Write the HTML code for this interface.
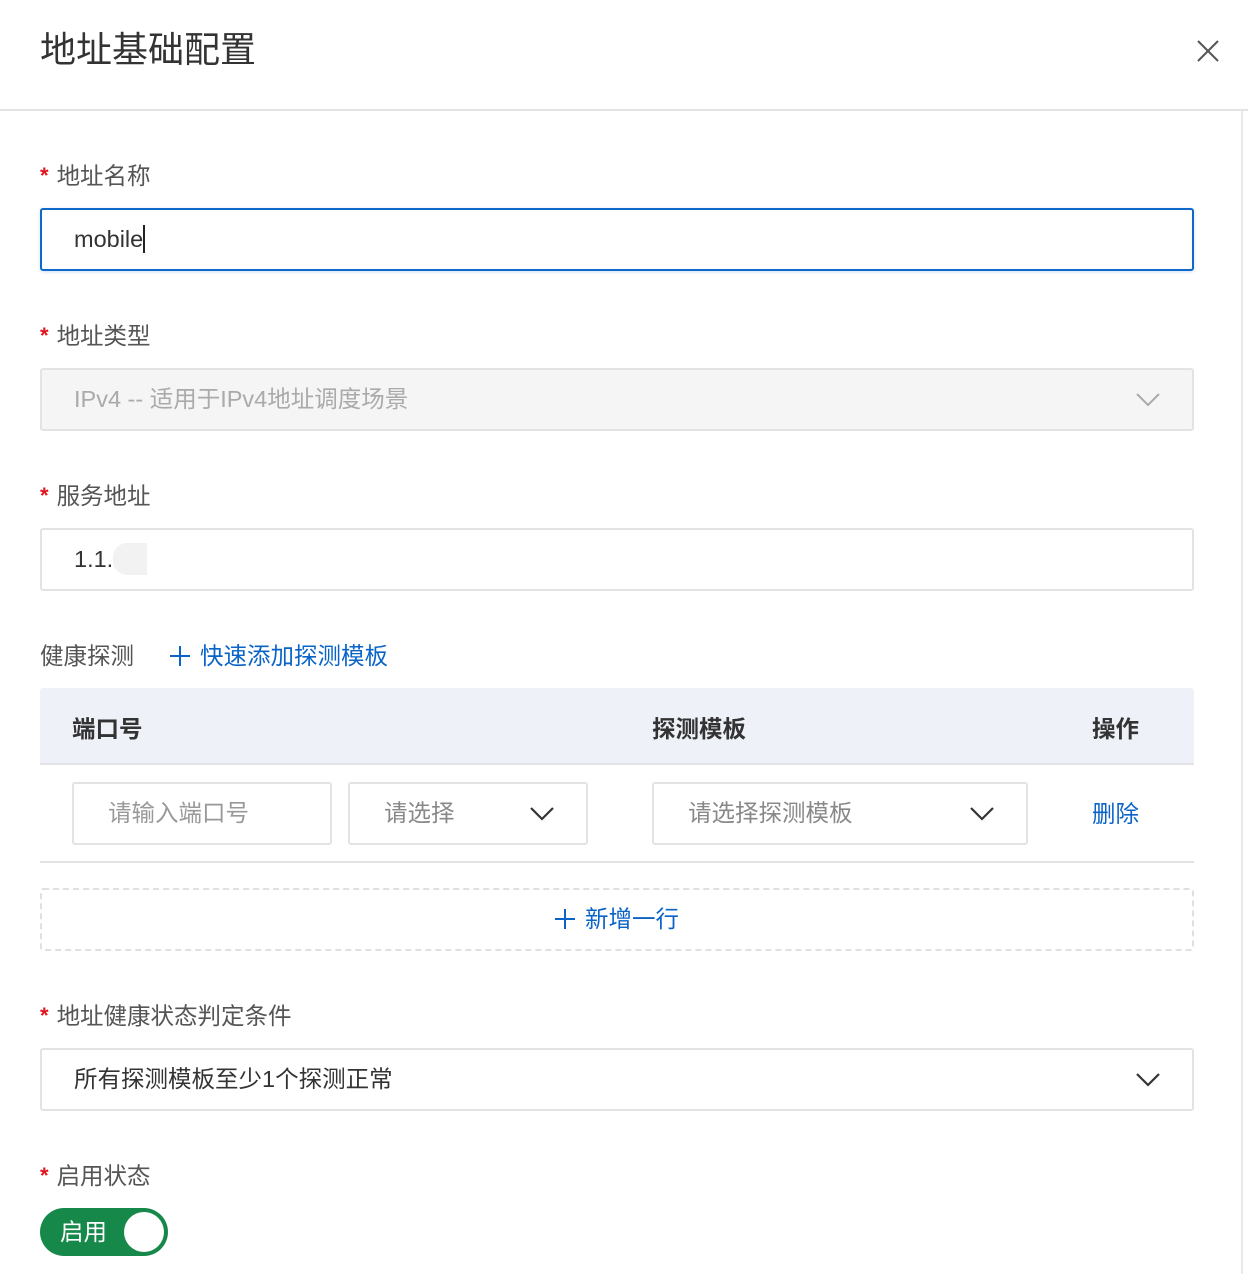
<!DOCTYPE html>
<html><head><meta charset="utf-8"><style>
*{margin:0;padding:0;box-sizing:border-box}
body{width:1248px;height:1274px;background:#fff;font-family:"Liberation Sans","Noto Sans CJK SC",sans-serif;position:relative;overflow:hidden;color:#333}
.a{position:absolute}
.title{left:40px;top:26px;font-size:36px;color:#333;line-height:48px}
.hdr{left:0;top:109px;width:1248px;height:2px;background:#e3e3e3}
.vr{left:1241px;top:110px;width:2px;height:1164px;background:#e8e8e8}
.lbl{font-size:23.5px;color:#555;line-height:30px;left:40px}
.lbl b{color:#e0141e;font-weight:bold;font-size:22px;margin-right:8px;position:relative;top:-1px}
.box{left:40px;width:1154px;height:63px;border:2px solid #e3e3e3;border-radius:3px;font-size:23.5px;line-height:59px;padding-left:32px;color:#333}
.chev{position:absolute}
.blue{color:#0a64c8}
</style></head><body>
<div class="a title">地址基础配置</div>
<svg class="a" style="left:1196px;top:39px" width="24" height="24" viewBox="0 0 24 24"><path d="M2 2L22 22M22 2L2 22" stroke="#555" stroke-width="2"/></svg>
<div class="a hdr"></div>
<div class="a vr"></div>

<div class="a lbl" style="top:161px"><b>*</b>地址名称</div>
<div class="a box" style="top:208px;border-color:#1068c8;box-shadow:0 1px 3px rgba(16,104,200,.2)">mobile<span style="display:inline-block;width:2px;height:28px;background:#222;vertical-align:-6px"></span></div>

<div class="a lbl" style="top:321px"><b>*</b>地址类型</div>
<div class="a box" style="top:368px;background:#f5f5f5;color:#aaa">IPv4 -- 适用于IPv4地址调度场景<svg class="chev" style="left:1094px;top:23px" width="24" height="14" viewBox="0 0 24 14"><path d="M1 1L12 12L23 1" fill="none" stroke="#aaa" stroke-width="2"/></svg></div>

<div class="a lbl" style="top:481px"><b>*</b>服务地址</div>
<div class="a box" style="top:528px">1.1.<span style="display:inline-block;width:34px;height:32px;background:#f2f2f2;border-radius:14px 0 0 14px;vertical-align:-8px"></span></div>

<div class="a lbl" style="top:641px">健康探测</div>
<div class="a blue" style="left:170px;top:641px;font-size:23.5px;line-height:30px"><svg width="20" height="20" viewBox="0 0 20 20" style="vertical-align:-2px;margin-right:10px"><path d="M10 0V20M0 10H20" stroke="#0a64c8" stroke-width="2"/></svg>快速添加探测模板</div>

<div class="a" style="left:40px;top:688px;width:1154px;height:77px;background:#eef1f8;border-bottom:2px solid #e3e3e3;border-radius:3px 3px 0 0;font-size:23.5px;font-weight:bold;color:#333">
<span class="a" style="left:32px;top:22px">端口号</span><span class="a" style="left:612px;top:22px">探测模板</span><span class="a" style="left:1052px;top:22px">操作</span></div>

<div class="a box" style="left:72px;top:782px;width:260px;color:#999;padding-left:34px">请输入端口号</div>
<div class="a box" style="left:348px;top:782px;width:240px;color:#888;padding-left:34px">请选择<svg class="chev" style="left:180px;top:23px" width="24" height="14" viewBox="0 0 24 14"><path d="M1 1L12 12L23 1" fill="none" stroke="#333" stroke-width="2.2"/></svg></div>
<div class="a box" style="left:652px;top:782px;width:376px;color:#888;padding-left:34px">请选择探测模板<svg class="chev" style="left:316px;top:23px" width="24" height="14" viewBox="0 0 24 14"><path d="M1 1L12 12L23 1" fill="none" stroke="#333" stroke-width="2.2"/></svg></div>
<div class="a blue" style="left:1092px;top:799px;font-size:23.5px;line-height:30px">删除</div>
<div class="a" style="left:40px;top:861px;width:1154px;height:2px;background:#e3e3e3"></div>

<div class="a" style="left:40px;top:888px;width:1154px;height:63px;border:2px dashed #e0e0e0;border-radius:3px;text-align:center;line-height:59px;font-size:23.5px"><span class="blue"><svg width="20" height="20" viewBox="0 0 20 20" style="vertical-align:-2px;margin-right:10px"><path d="M10 0V20M0 10H20" stroke="#0a64c8" stroke-width="2"/></svg>新增一行</span></div>

<div class="a lbl" style="top:1001px"><b>*</b>地址健康状态判定条件</div>
<div class="a box" style="top:1048px">所有探测模板至少1个探测正常<svg class="chev" style="left:1094px;top:23px" width="24" height="14" viewBox="0 0 24 14"><path d="M1 1L12 12L23 1" fill="none" stroke="#333" stroke-width="2.2"/></svg></div>

<div class="a lbl" style="top:1161px"><b>*</b>启用状态</div>
<div class="a" style="left:40px;top:1208px;width:128px;height:48px;border-radius:24px;background:#15884a;color:#fff;font-size:23.5px;line-height:48px;padding-left:20px">启用<div class="a" style="left:84px;top:4px;width:40px;height:40px;border-radius:50%;background:#fff"></div></div>
</body></html>
